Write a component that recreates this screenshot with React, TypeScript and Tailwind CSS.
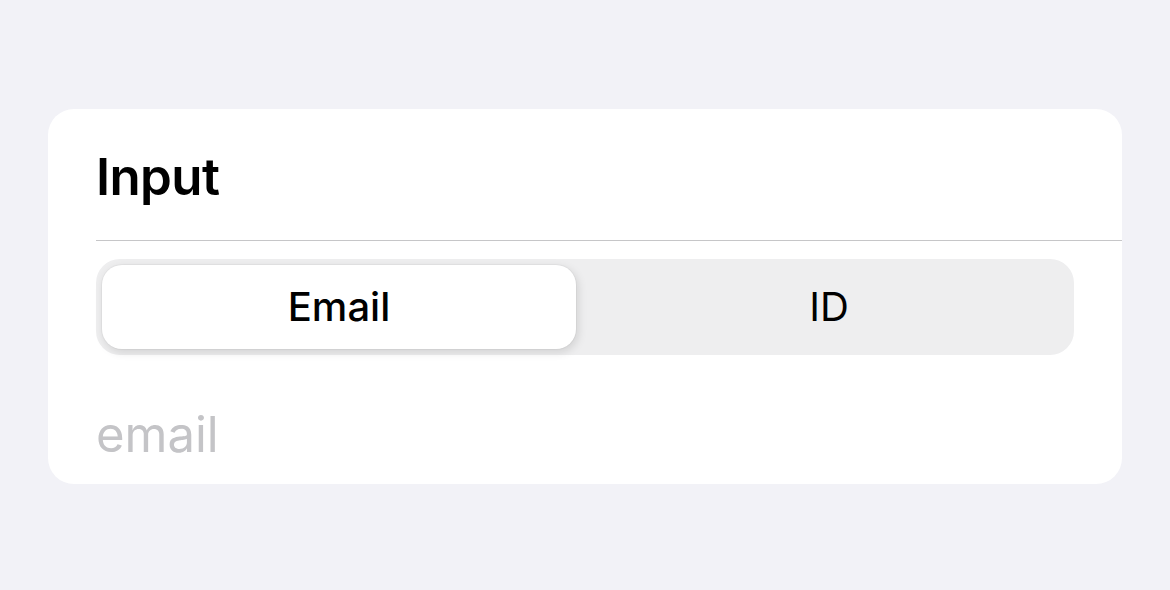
import React, { useState } from "react";

const App: React.FC = () => {
  const [mode, setMode] = useState<"email" | "id">("email");

  return (
    <div
      className="min-h-[590px] w-full bg-[#f2f2f7] pt-[109px] px-[48px]"
      style={{ fontFamily: "Inter, 'Noto Sans', sans-serif" }}
    >
      <div className="rounded-[26px] bg-white pl-[48px] overflow-hidden">
        {/* Header */}
        <div className="h-[131px] flex items-center pt-[4px]">
          <h1 className="text-[51px] font-semibold text-black tracking-[-0.6px] leading-none">
            Input
          </h1>
        </div>
        <div className="h-px bg-[#c6c6c8]" />

        {/* Segmented control */}
        <div className="mt-[18px] mr-[48px] h-[96px] rounded-[24px] bg-[#eeeeef] p-[6px] grid grid-cols-[474px_1fr] gap-[14px]">
          <button
            type="button"
            onClick={() => setMode("email")}
            className={`rounded-[20px] text-[40px] text-black ${
              mode === "email"
                ? "bg-white font-medium shadow-[2px_3px_10px_rgba(0,0,0,0.13),0_0_0_1px_rgba(0,0,0,0.03)]"
                : "font-normal"
            }`}
          >
            Email
          </button>
          <button
            type="button"
            onClick={() => setMode("id")}
            className={`rounded-[20px] text-[40px] text-black ${
              mode === "id"
                ? "bg-white font-medium shadow-[2px_3px_10px_rgba(0,0,0,0.13),0_0_0_1px_rgba(0,0,0,0.03)]"
                : "font-normal"
            }`}
          >
            ID
          </button>
        </div>

        {/* Field */}
        <div className="h-[129px] pt-[50px]">
          <input
            className="w-full pr-[48px] text-[49px] leading-none text-black placeholder:text-[#c4c4c7] outline-none bg-transparent"
            placeholder={mode === "email" ? "email" : "id"}
          />
        </div>
      </div>
    </div>
  );
};

export default App;
